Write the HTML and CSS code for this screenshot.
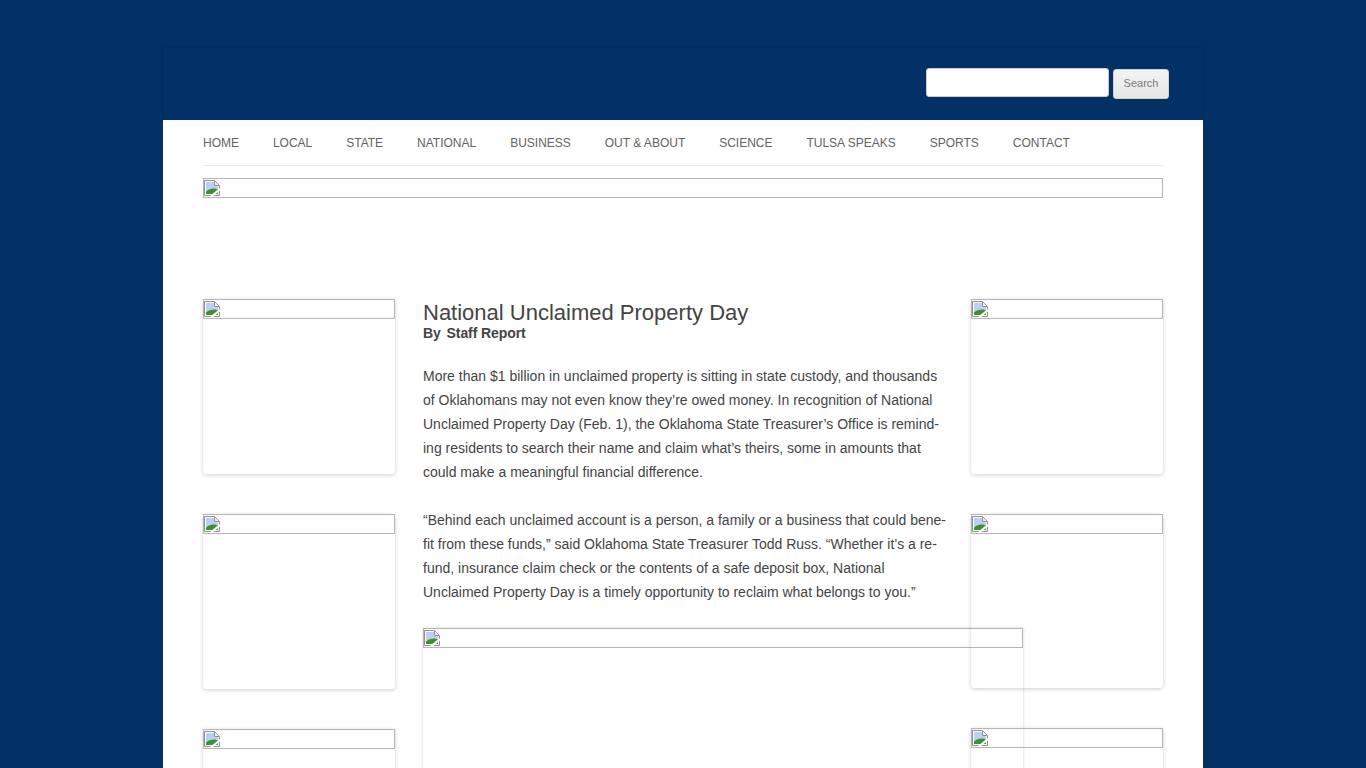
FILE: index.html
```html
<!DOCTYPE html>
<html>
<head>
    <title>National Unclaimed Property Day</title>
    <link rel="stylesheet" href="styles.css">
</head>
<body>
    <svg class="defs" width="0" height="0">
        <symbol id="broken" viewBox="0 0 16 16">
            <path d="M0.5 0.5H10.5L15.5 5.5V15.5H0.5Z" fill="#fff" stroke="#8f8f8f"/>
            <path d="M2 2H10V6H14V11H2Z" fill="#bcd0f2"/>
            <path d="M10.5 1V5.5H15" fill="#f2f2f2" stroke="#8f8f8f"/>
            <path d="M2 14V11.5C4.500 9 8 8 11 8.500L14 9.500V14Z" fill="#3f9130"/>
            <path d="M7 16.500L16 9" stroke="#fff" stroke-width="2.200"/>
        </symbol>
    </svg>
    <div class="page">
        <header class="top">
            <form class="search">
                <input type="text" class="search-input">
                <button type="button" class="search-btn">Search</button>
            </form>
        </header>
        <div class="content">
            <nav class="nav">
                <a href="#">Home</a>
                <a href="#">Local</a>
                <a href="#">State</a>
                <a href="#">National</a>
                <a href="#">Business</a>
                <a href="#">Out &amp; About</a>
                <a href="#">Science</a>
                <a href="#">Tulsa Speaks</a>
                <a href="#">Sports</a>
                <a href="#">Contact</a>
            </nav>
            <div class="broken banner"><svg class="icon"><use href="#broken"/></svg></div>
            <div class="columns">
                <aside class="side">
                    <div class="card"><div class="broken"><svg class="icon"><use href="#broken"/></svg></div></div>
                    <div class="card"><div class="broken"><svg class="icon"><use href="#broken"/></svg></div></div>
                    <div class="card"><div class="broken"><svg class="icon"><use href="#broken"/></svg></div></div>
                </aside>
                <main class="article">
                    <h1>National Unclaimed Property Day</h1>
                    <p class="byline">By <span class="author">Staff Report</span></p>
                    <p>More than $1 billion in unclaimed property is sitting in state custody, and thousands of Oklahomans may not even know they’re owed money. In recognition of National Unclaimed Property Day (Feb. 1), the Oklahoma State Treasurer’s Office is remind&shy;ing residents to search their name and claim what’s theirs, some in amounts that could make a meaningful financial difference.</p>
                    <p>“Behind each unclaimed account is a person, a family or a business that could bene&shy;fit from these funds,” said Oklahoma State Treasurer Todd Russ. “Whether it’s a re&shy;fund, insurance claim check or the contents of a safe deposit box, National Unclaimed Property Day is a timely opportunity to reclaim what belongs to you.”</p>
                    <div class="photo"><div class="broken"><svg class="icon"><use href="#broken"/></svg></div></div>
                </main>
                <aside class="side side-right">
                    <div class="card"><div class="broken"><svg class="icon"><use href="#broken"/></svg></div></div>
                    <div class="card card-short"><div class="broken"><svg class="icon"><use href="#broken"/></svg></div></div>
                    <div class="card"><div class="broken"><svg class="icon"><use href="#broken"/></svg></div></div>
                </aside>
            </div>
        </div>
    </div>
</body>
</html>
```

FILE: styles.css
```css
html, body {
    height: 768px;
    overflow: hidden;
}
body {
    margin: 0;
    background-color: #033065;
    font-family: "Liberation Sans", Arial, sans-serif;
    color: #444;
}
.defs {
    display: block;
    height: 0;
}
.page {
    width: 1040px;
    margin: 0 auto;
    padding-top: 48px;
}
.top {
    height: 72px;
    box-sizing: border-box;
    box-shadow: 0 0 2px rgba(0,0,0,0.2);
    display: flex;
    justify-content: flex-end;
    padding: 20px 34px 0 0;
}
.search {
    display: flex;
    align-items: flex-start;
    gap: 4px;
}
.search-input {
    width: 183px;
    height: 29px;
    box-sizing: border-box;
    border: 1px solid #ccc;
    border-radius: 3px;
    background: #fff;
    padding: 0;
}
.search-btn {
    width: 56px;
    height: 30px;
    margin-top: 1px;
    padding: 0 0 2px;
    border: 1px solid #d2d2d2;
    border-radius: 3px;
    background: linear-gradient(#f4f4f4, #e6e6e6);
    color: #7a7a7a;
    font-family: inherit;
    font-size: 11px;
}
.content {
    background-color: #fff;
    padding: 0 40px;
    height: 700px;
}
.nav {
    display: flex;
    gap: 33.95px;
    height: 45px;
    line-height: 47px;
    border-bottom: 1px solid #ededed;
}
.nav a {
    font-size: 12px;
    color: #636363;
    text-decoration: none;
    text-transform: uppercase;
}
.broken {
    height: 20px;
    box-sizing: border-box;
    border: 1px solid #b5b5b5;
}
.icon {
    display: block;
    width: 16px;
    height: 16px;
    margin-top: 1px;
}
.banner {
    margin-top: 12px;
}
.columns {
    display: flex;
    margin-top: 101px;
}
.side {
    width: 192px;
    flex: none;
    display: flex;
    flex-direction: column;
    gap: 40px;
}
.side-right {
    margin-left: 24px;
}
.card {
    height: 175px;
    flex: none;
    border-radius: 3px;
    box-shadow: 0 1px 4px rgba(0,0,0,0.2);
}
.card-short {
    height: 174px;
}
.article {
    width: 524px;
    flex: none;
    margin-left: 28px;
    font-size: 14px;
    line-height: 24px;
    hyphens: manual;
}
.article h1 {
    margin: 0;
    padding-top: 1px;
    font-size: 22px;
    font-weight: normal;
    line-height: 26px;
    color: #444;
}
.article p {
    margin: 0 0 24px;
}
.article .byline {
    margin: -1px 0 23px;
    line-height: 16px;
    font-weight: bold;
    letter-spacing: -0.08px;
}
.author {
    margin-left: 2px;
}
.photo {
    width: 600px;
    height: 400px;
    margin-top: 12px;
    box-shadow: 0 0 3px rgba(0,0,0,0.18);
}
```
